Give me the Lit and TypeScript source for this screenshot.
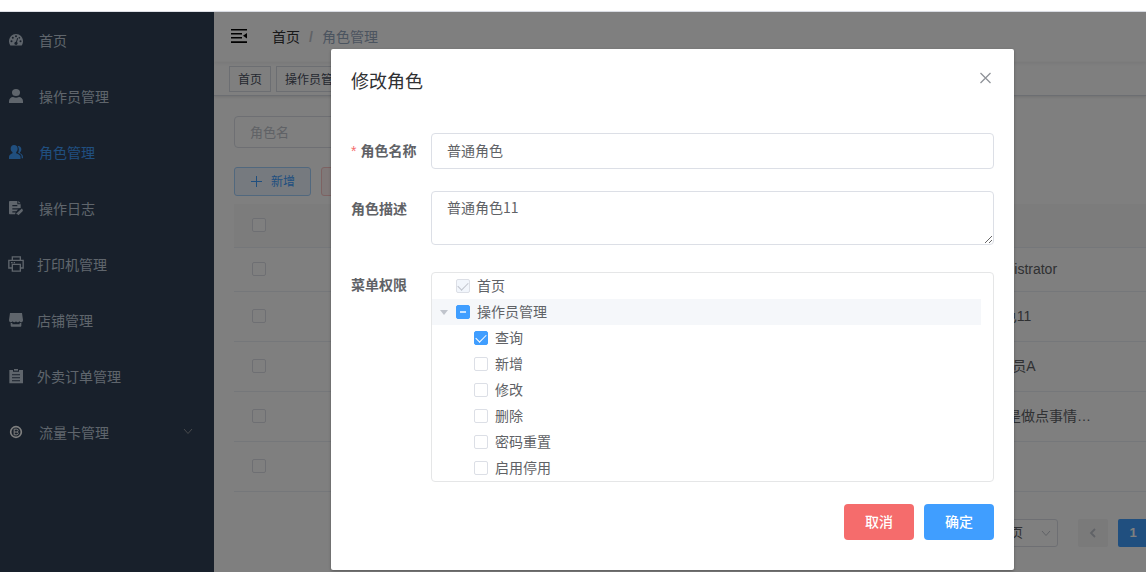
import { LitElement, html, svg, css, nothing } from "lit";
import type { TemplateResult } from "lit";
import { customElement, state } from "lit/decorators.js";
import { classMap } from "lit/directives/class-map.js";

interface MenuItem {
  label: string;
  icon: TemplateResult;
  tight?: boolean;
  bright?: boolean;
  expandable?: boolean;
}

interface Permission {
  label: string;
  checked?: boolean;
  disabled?: boolean;
  partial?: boolean;
  child?: boolean;
}

const icons = {
  dashboard: svg`
    <path fill="currentColor" d="M7 40.500C4.500 36.500 3 32.500 3 28 3 15.500 12.500 6 24 6s21 9.500 21 22c0 4.500-1.500 8.500-4 12.500z"/>
    <g fill="#304156"><circle cx="10.500" cy="27.500" r="3"/><circle cx="14.500" cy="17.500" r="3"/><circle cx="24" cy="13" r="3"/><circle cx="37.500" cy="27.500" r="3"/><circle cx="34" cy="17.500" r="2.500"/>
    <path d="M27.500 18l3 1-3.500 11c2 1.500 2.500 4 1.500 6-1 2.500-4 3.500-6.500 2.500s-3.500-4-2.500-6.500c.8-2 2.500-3 4.500-3z"/></g>`,
  user: svg`<g fill="currentColor"><ellipse cx="24" cy="13.500" rx="12" ry="10.500"/><path d="M3 45v-5c0-8 6-13 12-13 3 1.500 6 2 9 2s6-.5 9-2c6 0 12 5 12 13v5z"/></g>`,
  peoples: svg`<g fill="currentColor"><path d="M18 3c7 0 11 5 11 11 0 4-2 8-4.500 10v3.500c4 2 13 4 13 11V45H3v-6.500c0-7 7-9 10.500-11V24C10 22 8 18 8 14 8 8 12 3 18 3z"/><path d="M29 6.500c6-1 11 3 11 9.500 0 4-1.500 7-4 9v3c4 2 9 5 9 11v4h-4v-5c0-6-6-9-11-11.500 3.500-6 4-14-1-20z"/></g>`,
  log: svg`<path fill="currentColor" d="M7 3h21v10h10v11l-9 1H13v3.500h17L25 34H13v3.500h10L21 43H7c-3 0-4-1-4-4V7c0-3 1-4 4-4zm6 12v3.500h15V15zM31 3l7 7h-7z"/><path d="M26 42L43 27M30 44l14-13" stroke="currentColor" stroke-width="4" fill="none"/>`,
  printer: svg`<g fill="none" stroke="currentColor" stroke-width="4"><path d="M13 12V2.500h24V12M13 36H2.500V13h43v23H37"/><path d="M13 25h24v20.500H13z"/><path d="M9 20h5M17 20h4"/></g>`,
  shop: svg`<path fill="currentColor" d="M6 3h36l3 21c0 5-3 7-5.500 7-3 0-4.500-2-5.500-3-1 2-3 3-5 3s-4-1-5-3c-1 2-3 3-5 3s-4-1-5-3c-1 2-3 3-5.500 3C6 31 3 29 3 24z"/><path fill="currentColor" d="M8 33h5v4h22v-4h5v8c0 2-1 3-3 3H11c-2 0-3-1-3-3z"/>`,
  order: svg`<path fill="currentColor" fill-rule="evenodd" d="M4 6h11v5h18V6h12v40H4zm8 13v3h24v-3zm0 9v3h24v-3zm0 9v3h24v-3z"/><path fill="currentColor" d="M18 3h12v5H18z"/>`,
  coin: svg`<circle cx="24" cy="24" r="16" fill="none" stroke="currentColor" stroke-width="5"/><path d="M18.500 15.500h8c5 0 5 7 1 8.500 5 1 4 8.500-1 8.500h-8zM19 24h9" fill="none" stroke="currentColor" stroke-width="3"/>`,
};

const menu: MenuItem[] = [
  { label: "首页", icon: icons.dashboard },
  { label: "操作员管理", icon: icons.user },
  { label: "角色管理", icon: icons.peoples },
  { label: "操作日志", icon: icons.log },
  { label: "打印机管理", icon: icons.printer, tight: true },
  { label: "店铺管理", icon: icons.shop, tight: true },
  { label: "外卖订单管理", icon: icons.order, tight: true },
  { label: "流量卡管理", icon: icons.coin, bright: true, expandable: true },
];

const roles = [
  { name: "超级管理员", desc: "Super administrator" },
  { name: "普通角色", desc: "普通角色11" },
  { name: "管理员A", desc: "普通管理员A" },
  { name: "操作员", desc: "普通的操作员1就是做点事情…" },
  { name: "测试", desc: "" },
];

@customElement("app-root")
export class AppRoot extends LitElement {
  @state() private active = "角色管理";

  @state() private permissions: Permission[] = [
    { label: "首页", checked: true, disabled: true },
    { label: "操作员管理", partial: true },
    { label: "查询", checked: true, child: true },
    { label: "新增", child: true },
    { label: "修改", child: true },
    { label: "删除", child: true },
    { label: "密码重置", child: true },
    { label: "启用停用", child: true },
  ];

  static styles = css`
    :host {
      display: flex;
      flex-direction: column;
      min-height: 100vh;
      overflow: hidden;
      background: #fff;
      color: #606266;
      font: 14px/20px "Liberation Sans", "Noto Sans CJK SC", sans-serif;
    }
    * { box-sizing: border-box; }
    a { color: inherit; text-decoration: none; }
    button, input, textarea, select { margin: 0; font: inherit; color: inherit; }
    button { cursor: pointer; }

    .strip { height: 12px; border-bottom: 1px solid #dcdfe6; }
    .shell { position: relative; flex: 1; display: flex; }

    .sidebar { width: 214px; flex: none; background: #304156; }
    .entry {
      display: flex;
      align-items: center;
      gap: 15px;
      height: 56px;
      padding: 0 20px 0 8px;
      color: #bfcbd9;
    }
    .entry.tight { gap: 13px; }
    .entry.active { color: #409eff; }
    .entry .icon { width: 16px; height: 16px; flex: none; }
    .entry.bright .icon { color: #fff; }
    .entry .label { flex: 1; padding-top: 2px; }
    .arrow { width: 12px; height: 12px; flex: none; color: #909399; }

    .main { flex: 1; min-width: 0; }
    .navbar {
      display: flex;
      align-items: center;
      height: 50px;
      padding: 0 17px;
      gap: 25px;
      box-shadow: 0 1px 4px rgba(0, 21, 41, 0.08);
    }
    .fold { display: flex; padding: 0; border: 0; background: none; color: #000; }
    .fold svg { width: 16px; height: 16px; }
    .crumbs { display: flex; gap: 9px; color: #303133; }
    .crumbs .here { color: #97a8be; }
    .crumbs .slash { color: #c0c4cc; font-weight: 700; }
    .tags {
      display: flex;
      gap: 5px;
      height: 34px;
      padding: 4px 15px;
      border-bottom: 1px solid #d8dce5;
      box-shadow: 0 1px 3px rgba(0, 0, 0, 0.12);
    }
    .tag {
      height: 26px;
      padding: 0 8px;
      border: 1px solid #d8dce5;
      color: #495060;
      font-size: 12px;
      line-height: 26px;
      white-space: nowrap;
    }

    .content { padding: 20px 0 20px 20px; }
    .search {
      display: block;
      width: 200px;
      height: 32px;
      padding: 0 15px;
      border: 1px solid #dcdfe6;
      border-radius: 4px;
      background: #fff;
      font-size: 13px;
    }
    .search::placeholder { color: #c0c4cc; opacity: 1; }
    .tools { display: flex; gap: 10px; margin: 19px 0 8px; }
    .tool {
      display: flex;
      align-items: center;
      gap: 8px;
      height: 29px;
      padding: 0 15px;
      border: 1px solid #a3d0fd;
      border-radius: 3px;
      background: #ecf5ff;
      color: #409eff;
      font-size: 12px;
    }
    .tool svg { width: 13px; height: 13px; }
    .tool.danger { border-color: #fbc4c4; background: #fef0f0; color: #f56c6c; }

    .grid { width: 100%; table-layout: fixed; border-collapse: separate; border-spacing: 0; }
    .grid .pick { width: 50px; }
    .grid .desc { width: 210px; }
    .grid .more { width: 45px; }
    .grid th, .grid td {
      height: 50px;
      padding: 0 0 2px;
      border-bottom: 1px solid #ebeef5;
      text-align: center;
      white-space: nowrap;
    }
    .grid th { height: 44px; background: #f8f8f9; color: #515a6e; }
    .grid tr.first td { height: 44px; }
    .grid .check { margin: 0 auto; }

    .pager { display: flex; justify-content: flex-end; margin: 27px -2px 0 0; font-size: 13px; }
    .size { display: grid; align-items: center; margin-right: 20px; }
    .size select, .size svg { grid-area: 1 / 1; }
    .size select {
      appearance: none;
      width: 100px;
      height: 28px;
      padding: 0 0 0 20px;
      border: 1px solid #dcdfe6;
      border-radius: 3px;
      background: #fff;
    }
    .size svg { width: 12px; height: 12px; margin-right: 6px; justify-self: end; color: #c0c4cc; pointer-events: none; }
    .page {
      display: grid;
      place-items: center;
      width: 30px;
      height: 28px;
      margin-right: 10px;
      padding: 0;
      border: 0;
      border-radius: 2px;
      background: #f4f4f5;
      color: #c0c4cc;
      font-weight: 700;
    }
    .page svg { width: 12px; height: 12px; }
    .page.current { margin-right: 0; background: #409eff; color: #fff; }

    .check {
      appearance: none;
      display: grid;
      place-content: center;
      width: 14px;
      height: 14px;
      flex: none;
      border: 1px solid #dcdfe6;
      border-radius: 2px;
      background: #fff;
    }
    .check:checked, .check:indeterminate { border-color: #409eff; background: #409eff; }
    .check:checked::before {
      content: "";
      width: 5px;
      height: 9px;
      margin-bottom: 3px;
      border: solid #fff;
      border-width: 0 1px 1px 0;
      transform: rotate(45deg);
    }
    .check:indeterminate::before { content: ""; width: 6px; height: 2px; background: #c6e2ff; }
    .check:disabled { border-color: #dcdfe6; background: #f2f6fc; }
    .check:disabled::before { border-color: #c0c4cc; }

    .mask {
      position: absolute;
      inset: 0;
      display: flex;
      align-items: flex-start;
      padding: 37px 132px 0 331px;
      background: rgba(0, 0, 0, 0.5);
    }
    .dialog {
      flex: 1;
      min-width: 0;
      padding: 20px 20px 30px;
      border-radius: 2px;
      background: #fff;
      box-shadow: 0 1px 3px rgba(0, 0, 0, 0.3);
      font-family: "Noto Sans CJK SC", sans-serif;
    }
    .head { display: flex; justify-content: space-between; align-items: flex-start; height: 24px; margin-bottom: 40px; }
    .title { margin: 0; color: #303133; font-size: 18px; font-weight: 400; line-height: 22px; }
    .close { display: flex; padding: 1px 0; border: 0; background: none; color: #909399; }
    .close svg { width: 16px; height: 16px; }
    .field { display: grid; grid-template-columns: 80px 1fr; margin-bottom: 22px; }
    .name { height: 34px; color: #606266; font-weight: 700; line-height: 34px; }
    .name.required::before { content: "*"; margin-right: 4px; color: #f56c6c; font-family: "Liberation Sans", sans-serif; font-weight: 400; }
    .name.tree-name { line-height: 24px; }
    .text {
      width: 100%;
      height: 36px;
      padding: 0 15px 2px;
      border: 1px solid #dcdfe6;
      border-radius: 4px;
      background: #fff;
      outline: none;
    }
    textarea.text { display: block; height: 54px; margin-bottom: 5px; padding: 5px 15px; line-height: 21px; resize: vertical; }
    .tree { padding-right: 12px; border: 1px solid #e5e6e7; border-radius: 4px; }
    .node { display: flex; align-items: center; height: 26px; }
    .node.child { padding-left: 18px; }
    .node.focus { background: #f5f7fa; }
    .node label { padding: 0 0 2px 7px; }
    .caret { display: grid; place-items: center; width: 24px; flex: none; color: #c0c4cc; }
    .caret svg { width: 8px; height: 8px; }
    .actions { display: flex; justify-content: flex-end; gap: 10px; }
    .action {
      width: 70px;
      height: 36px;
      padding: 0 0 2px;
      border: 0;
      border-radius: 4px;
      background: #409eff;
      color: #fff;
      font-weight: 500;
    }
    .action.cancel { background: #f56c6c; }
  `;

  private toggle(index: number, event: Event) {
    const checked = (event.target as HTMLInputElement).checked;
    this.permissions = this.permissions.map((p, i) =>
      i === index ? { ...p, checked, partial: false } : p,
    );
  }

  private renderEntry(item: MenuItem) {
    const classes = {
      entry: true,
      active: item.label === this.active,
      tight: !!item.tight,
      bright: !!item.bright,
    };
    return html`<a class=${classMap(classes)} href="#" @click=${() => (this.active = item.label)}>
      <svg class="icon" viewBox="0 0 48 48" aria-hidden="true">${item.icon}</svg>
      <span class="label">${item.label}</span>
      ${item.expandable
        ? html`<svg class="arrow" viewBox="0 0 12 12" fill="none" stroke="currentColor"><path d="M2 3l4 4.500L10 3" /></svg>`
        : nothing}
    </a>`;
  }

  private renderNode(p: Permission, i: number) {
    return html`<div class=${classMap({ node: true, child: !!p.child, focus: !!p.partial })}>
      <span class="caret">
        ${i === 1 ? html`<svg viewBox="0 0 8 8"><path fill="currentColor" d="M0 2h8L4 7z" /></svg>` : nothing}
      </span>
      <input
        class="check"
        type="checkbox"
        id="perm-${i}"
        .checked=${!!p.checked}
        .indeterminate=${!!p.partial}
        ?disabled=${!!p.disabled}
        @change=${(e: Event) => this.toggle(i, e)}
      />
      <label for="perm-${i}">${p.label}</label>
    </div>`;
  }

  private renderPage() {
    return html`<main class="main">
      <header class="navbar">
        <button class="fold" aria-label="收起菜单">
          <svg viewBox="0 0 16 16" fill="currentColor"><path d="M0 0h16v1.600H0zM0 4h11v1.500H0zM0 8h11v1.500H0zM0 12.300h16v1.700H0zM16 4v5.500l-4-2.750z" /></svg>
        </button>
        <nav class="crumbs"><a href="#">首页</a><span class="slash">/</span><span class="here">角色管理</span></nav>
      </header>
      <nav class="tags"><a class="tag" href="#">首页</a><a class="tag" href="#">操作员管理</a></nav>
      <div class="content">
        <input class="search" type="text" placeholder="角色名" aria-label="角色名" />
        <div class="tools">
          <button class="tool">
            <svg viewBox="0 0 13 13" fill="none" stroke="currentColor"><path d="M1 6.500h11M6.500 1v11" /></svg>新增
          </button>
          <button class="tool danger">删除</button>
        </div>
        <table class="grid">
          <colgroup><col class="pick" /><col /><col class="desc" /><col class="more" /></colgroup>
          <thead>
            <tr><th><input class="check" type="checkbox" aria-label="全选" /></th><th>角色名称</th><th>描述</th><th></th></tr>
          </thead>
          <tbody>
            ${roles.map(
              (r, i) => html`<tr class=${i === 0 ? "first" : ""}>
                <td><input class="check" type="checkbox" aria-label=${r.name} /></td>
                <td>${r.name}</td>
                <td>${r.desc}</td>
                <td></td>
              </tr>`,
            )}
          </tbody>
        </table>
        <div class="pager">
          <div class="size">
            <select aria-label="每页条数"><option>10条/页</option><option>20条/页</option></select>
            <svg viewBox="0 0 12 12" fill="none" stroke="currentColor"><path d="M2 4l4 4.500L10 4" /></svg>
          </div>
          <button class="page" aria-label="上一页">
            <svg viewBox="0 0 12 12" fill="none" stroke="currentColor" stroke-width="1.800"><path d="M8 2L4 6l4 4" /></svg>
          </button>
          <button class="page current">1</button>
        </div>
      </div>
    </main>`;
  }

  private renderDialog() {
    return html`<div class="mask">
      <section class="dialog" role="dialog" aria-labelledby="dialog-title">
        <header class="head">
          <h2 class="title" id="dialog-title">修改角色</h2>
          <button class="close" aria-label="关闭">
            <svg viewBox="0 0 16 16" fill="none" stroke="currentColor" stroke-width="1.300"><path d="M2.500 3l10 10M12.500 3l-10 10" /></svg>
          </button>
        </header>
        <div class="field">
          <label class="name required" for="role-name">角色名称</label>
          <input class="text" id="role-name" type="text" .value=${"普通角色"} />
        </div>
        <div class="field">
          <label class="name" for="role-desc">角色描述</label>
          <textarea class="text" id="role-desc" .value=${"普通角色11"}></textarea>
        </div>
        <div class="field">
          <span class="name tree-name" id="tree-name">菜单权限</span>
          <div class="tree" role="group" aria-labelledby="tree-name">
            ${this.permissions.map((p, i) => this.renderNode(p, i))}
          </div>
        </div>
        <footer class="actions">
          <button class="action cancel">取消</button>
          <button class="action">确定</button>
        </footer>
      </section>
    </div>`;
  }

  render() {
    return html`<div class="strip"></div>
      <div class="shell">
        <nav class="sidebar">${menu.map((m) => this.renderEntry(m))}</nav>
        ${this.renderPage()} ${this.renderDialog()}
      </div>`;
  }
}
